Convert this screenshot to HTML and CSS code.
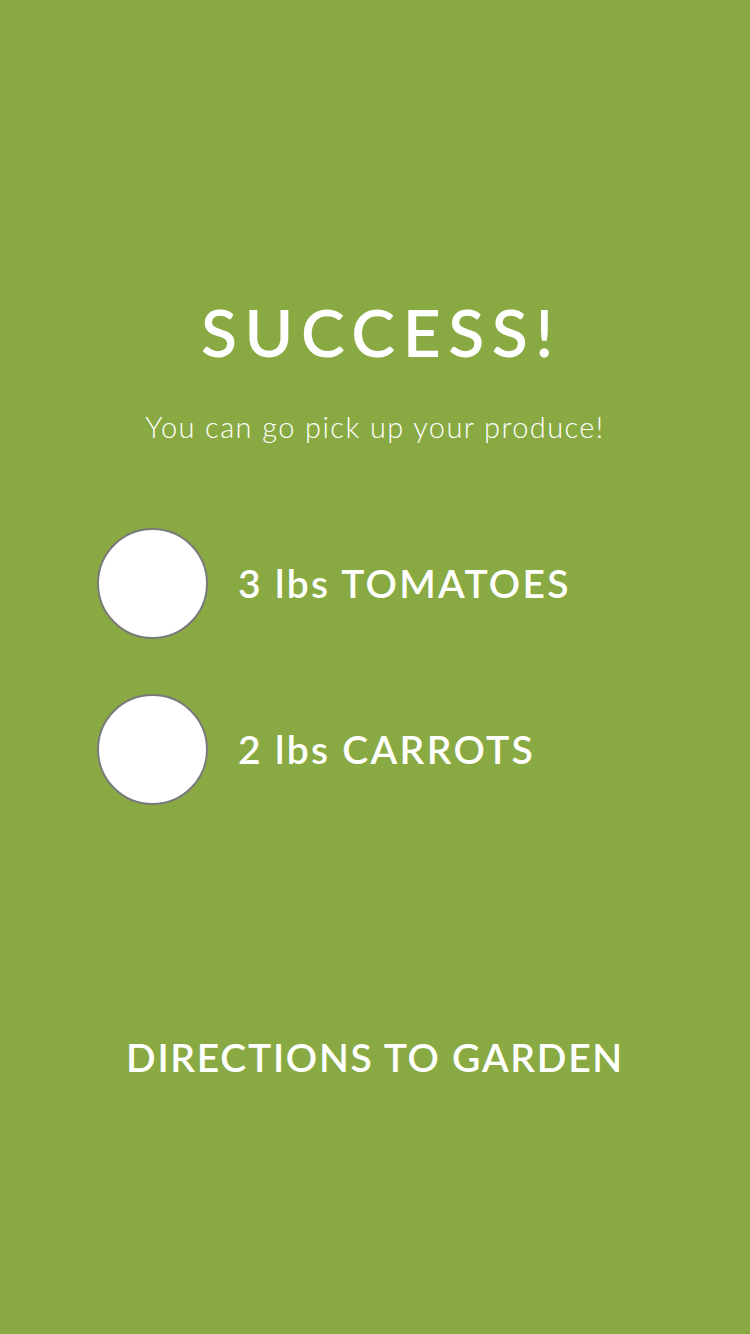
FILE: index.html
```html
<!DOCTYPE html>
<html lang="en">
<head>
<meta charset="utf-8">
<title>Success</title>
<link rel="stylesheet" href="styles.css">
</head>
<body>
<main class="screen">
  <h1 class="title">SUCCESS!</h1>
  <p class="subtitle">You can go pick up your produce!</p>
  <ul class="items">
    <li class="item"><span class="check"></span><span class="item-label">3 lbs TOMATOES</span></li>
    <li class="item"><span class="check"></span><span class="item-label">2 lbs CARROTS</span></li>
  </ul>
  <a class="directions" href="#">DIRECTIONS TO GARDEN</a>
</main>
</body>
</html>
```
FILE: styles.css
```css
html, body {
  margin: 0;
  padding: 0;
}
body {
  background: #89aa42;
  font-family: "Lato", "Open Sans", sans-serif;
  color: #ffffff;
}
.screen {
  width: 750px;
  min-height: 1334px;
  display: flex;
  flex-direction: column;
  align-items: center;
  box-sizing: border-box;
  padding-top: 299px;
}
.title {
  margin: 0;
  font-size: 66px;
  line-height: 1;
  font-weight: 600;
  letter-spacing: 7.5px;
  text-align: center;
  padding-left: 12px;
}
.subtitle {
  margin: 47px 0 0;
  font-size: 29px;
  line-height: 1;
  font-weight: 300;
  letter-spacing: 1.4px;
  text-align: center;
}
.items {
  list-style: none;
  margin: 87px 0 0;
  padding: 0 0 0 97px;
  align-self: stretch;
  display: flex;
  flex-direction: column;
  gap: 55px;
}
.item {
  display: flex;
  align-items: center;
  gap: 30px;
}
.check {
  width: 111px;
  height: 111px;
  box-sizing: border-box;
  border-radius: 50%;
  background: #ffffff;
  border: 2px solid #7a7a7a;
  flex: none;
}
.item-label {
  font-size: 39px;
  line-height: 1;
  font-weight: 600;
  letter-spacing: 2.3px;
}
.directions {
  margin-top: 233px;
  font-size: 39px;
  line-height: 1;
  font-weight: 600;
  letter-spacing: 1.7px;
  color: #ffffff;
  text-decoration: none;
}
```
